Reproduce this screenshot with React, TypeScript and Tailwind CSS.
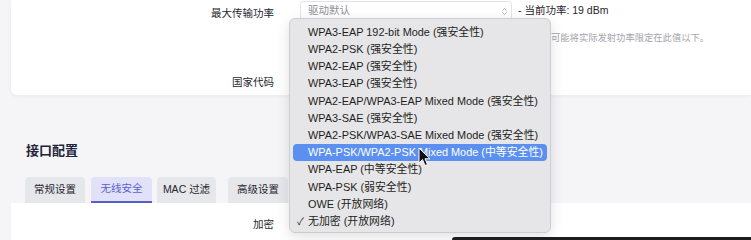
import { ChevronsUpDown } from "lucide-react";

const options = [
  "WPA3-EAP 192-bit Mode (强安全性)",
  "WPA2-PSK (强安全性)",
  "WPA2-EAP (强安全性)",
  "WPA3-EAP (强安全性)",
  "WPA2-EAP/WPA3-EAP Mixed Mode (强安全性)",
  "WPA3-SAE (强安全性)",
  "WPA2-PSK/WPA3-SAE Mixed Mode (强安全性)",
  "WPA-PSK/WPA2-PSK Mixed Mode (中等安全性)",
  "WPA-EAP (中等安全性)",
  "WPA-PSK (弱安全性)",
  "OWE (开放网络)",
  "无加密 (开放网络)",
];

const tabs = ["常规设置", "无线安全", "MAC 过滤", "高级设置"];

function Cursor() {
  return (
    <svg width="13" height="20" viewBox="0 0 13 20" className="absolute left-[418px] top-[147px]">
      <path
        d="M1 1 L1 16 L4.5 12.5 L7 18.5 L9.5 17.5 L7 11.8 L12 11.8 Z"
        fill="#111"
        stroke="#fff"
        strokeWidth="1"
        strokeLinejoin="round"
      />
    </svg>
  );
}

export default function App() {
  return (
    <div className="relative w-[751px] h-[240px] overflow-hidden bg-[#f5f5f7] text-[#26262e] font-['Liberation_Sans','Noto_Sans_CJK_SC',sans-serif]">
      {/* wireless device card */}
      <div className="ml-[11px] h-[95px] bg-white rounded-bl-md shadow-[0_1px_4px_rgba(0,0,0,0.05)]">
        <div className="flex items-start">
          <div className="w-[263px] mt-[3px] text-right text-[10.5px] leading-[20px]">最大传输功率</div>
          <div className="ml-[26px] mt-[1px] flex items-center">
            <div className="w-[212px] h-[20px] flex items-center justify-between pl-[7px] pr-[2px] border border-[#e4e4e8] rounded-[3px] bg-white">
              <span className="text-[10.5px] text-[#8e8e96]">驱动默认</span>
              <ChevronsUpDown size={9} className="text-[#9a9aa2]" />
            </div>
            <span className="ml-[6px] text-[10.5px]">- 当前功率: 19 dBm</span>
          </div>
        </div>
        <p className="ml-[289px] mt-[9px] whitespace-nowrap text-[9.3px] leading-[12px] text-[#a4a4ac]">
          由于各国法规限制，某些驱动程序和无线网卡固件在工作时仍可能将实际发射功率限定在此值以下。
        </p>
        <div className="flex items-start mt-[28px]">
          <div className="w-[263px] text-right text-[10.5px] leading-[20px]">国家代码</div>
          <div className="ml-[26px] w-[212px] h-[20px] border border-[#e4e4e8] rounded-[3px]" />
        </div>
      </div>

      <h2 className="ml-[26px] mt-[47px] text-[13px] leading-[18px] font-bold text-[#23233a]">接口配置</h2>

      <div className="ml-[25px] mt-[17px] flex text-[10.5px]">
        {tabs.map((t, i) => (
          <div
            key={t}
            className={
              i === 1
                ? "w-[61px] h-[26px] mr-[5px] flex items-center justify-center rounded-t-[4px] bg-[#e1e1f9] text-[#5b5fcf] border-b-2 border-[#5a5ec4]"
                : i === 2
                ? "w-[59px] h-[26px] mr-[12px] flex items-center justify-center rounded-t-[4px] bg-[#e6e7ea]"
                : "w-[60px] h-[26px] mr-[6px] flex items-center justify-center rounded-t-[4px] bg-[#e6e7ea]"
            }
          >
            {t}
          </div>
        ))}
      </div>

      <div className="ml-[11px] h-[60px] bg-white pt-[11px]">
        <div className="w-[263px] text-right text-[10.5px] leading-[20px]">加密</div>
      </div>

      {/* open select menu */}
      <div className="absolute left-[289px] top-[18px] w-[262px] h-[215px] py-[4.5px] rounded-[6px] bg-[#e6e6e8] border border-[#cdcdd1] shadow-[0_4px_14px_rgba(0,0,0,0.12)] text-[10.9px] text-[#1e1e22]">
        {options.map((o, i) => (
          <div
            key={o}
            className={
              i === 7
                ? "mx-[3px] h-[17.2px] flex items-center pl-[4px] rounded-[4px] bg-[#5b8ff0] text-white"
                : "mx-[3px] h-[17.2px] flex items-center pl-[4px]"
            }
          >
            <span className="w-[11px] text-[10px]">{i === 11 ? "✓" : ""}</span>
            <span className="whitespace-nowrap">{o}</span>
          </div>
        ))}
      </div>

      <Cursor />

      <div className="absolute left-[452px] bottom-0 w-[300px] h-[3px] rounded-tl-[3px] bg-[#1d1d20]" />
    </div>
  );
}
